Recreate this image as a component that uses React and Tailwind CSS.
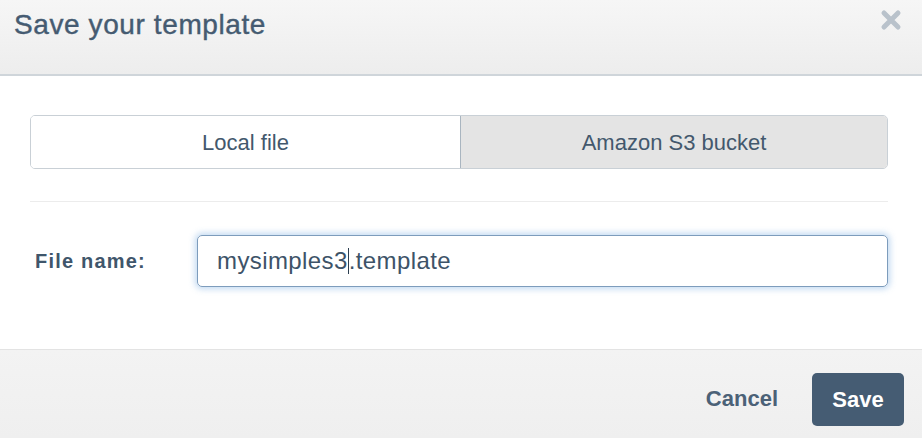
export default function App() {
  const font = { fontFamily: '"Liberation Sans", Arial, sans-serif' };
  return (
    <div className="w-[922px] h-[438px] bg-white flex flex-col overflow-hidden" style={font}>
      <div className="h-[76px] shrink-0 bg-gradient-to-b from-[#f6f6f6] to-[#ededed] border-b-2 border-[#cfd5da] flex items-start justify-between pl-[14px] pr-[20px]">
        <h1 className="mt-[9px] text-[28px] leading-[32px] text-[#455b71] tracking-[0.6px] [-webkit-text-stroke:0.4px_#455b71]">Save your template</h1>
        <svg className="mt-[9px]" width="22" height="22" viewBox="0 0 22 22">
          <path d="M4 4 L18 18 M18 4 L4 18" stroke="#b9c2cb" strokeWidth="5" strokeLinecap="round" />
        </svg>
      </div>
      <div className="flex-1 px-[30px] pt-[39px]">
        <div className="flex h-[54px] w-[858px] rounded-[5px] border border-[#c9d0d6] overflow-hidden">
          <div className="w-[429px] bg-white flex items-center justify-center text-[22px] text-[#43586d]">Local file</div>
          <div className="flex-1 bg-[#e4e4e4] border-l border-[#a9b5c0] flex items-center justify-center text-[22px] text-[#43586d]">Amazon S3 bucket</div>
        </div>
        <div className="mt-[32px] h-px w-[858px] bg-[#ececec]" />
        <div className="mt-[33px] flex items-center">
          <div className="w-[167px] pl-[5px] text-[20px] font-bold text-[#3f566b] tracking-[1.2px]">File name:</div>
          <div className="w-[691px] h-[52px] rounded-[5px] border border-[#7d9cbc] shadow-[0_0_6px_2px_rgba(120,170,225,0.45)] flex items-center pl-[19px] text-[24px] text-[#3d5368] tracking-[0.4px]">
            <span>mysimples3</span>
            <span className="inline-block w-px h-[26px] bg-[#2c3e50]" />
            <span>.template</span>
          </div>
        </div>
      </div>
      <div className="h-[89px] shrink-0 border-t border-[#e3e3e3] bg-gradient-to-b from-[#f3f3f3] to-[#efefef] flex items-center justify-end pr-[18px]">
        <span className="text-[22px] font-bold text-[#4b6177] mr-[34px] mt-[8px]">Cancel</span>
        <div className="w-[92px] h-[53px] rounded-[5px] bg-[#455c73] flex items-center justify-center text-[22px] font-bold text-white mt-[10px]">Save</div>
      </div>
    </div>
  );
}
